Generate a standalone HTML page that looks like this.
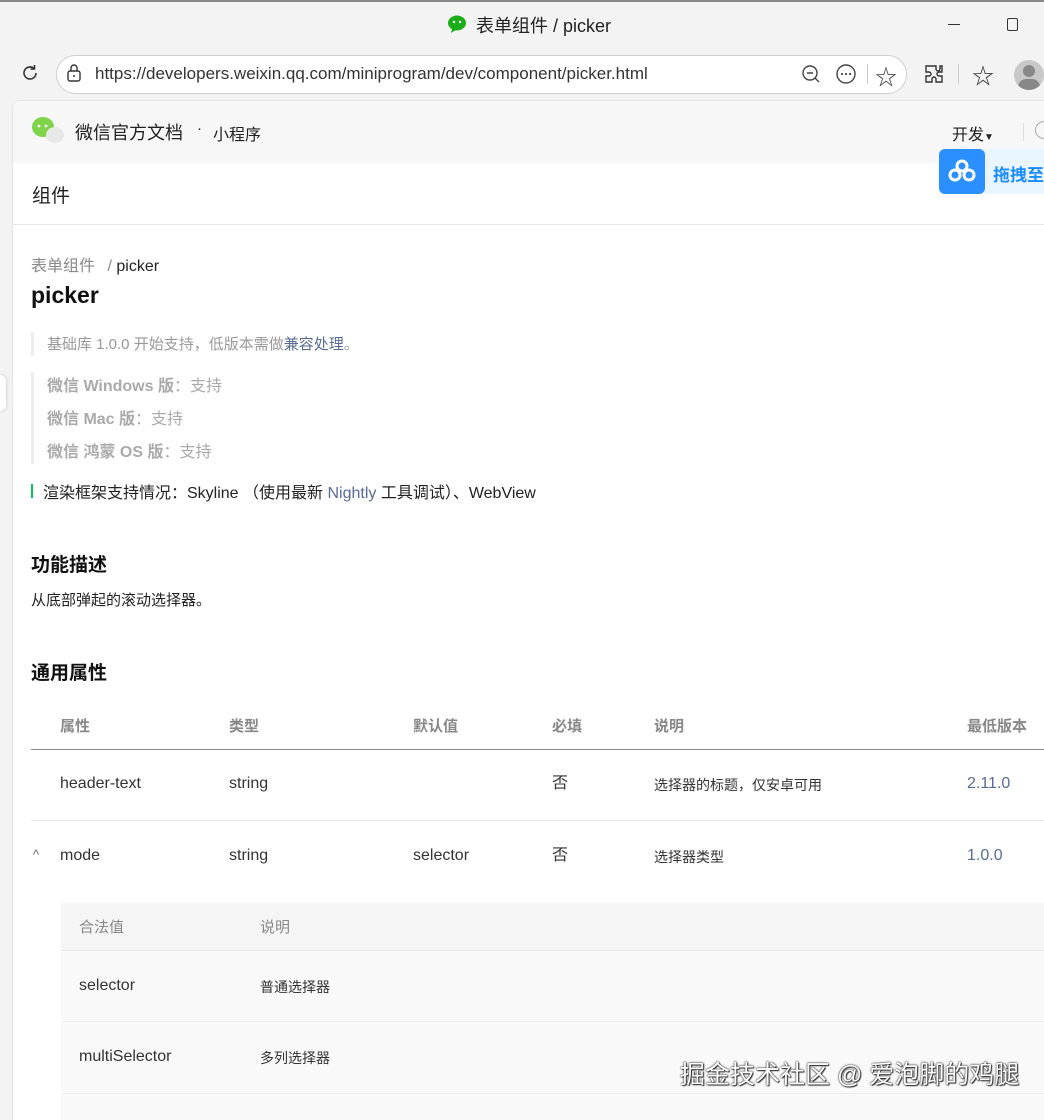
<!DOCTYPE html>
<html><head><meta charset="utf-8"><style>
*{margin:0;padding:0;box-sizing:border-box}
body{width:1044px;height:1116px;overflow:hidden;background:#f3f3f3;font-family:"Liberation Sans","Noto Sans CJK SC",sans-serif;position:relative;color:#1a1a1a}
.abs{position:absolute}
.title{top:0;left:0;width:1044px;height:46px;border-top:2px solid #888;}
.page{position:absolute;left:12px;top:100px;width:1040px;height:1020px;background:#fff;border-top-left-radius:8px;border-left:1px solid #e4e4e4;border-top:1px solid #e4e4e4;overflow:hidden}
.hdr{position:absolute;left:0;top:0;width:100%;height:62px;background:#f7f7f7}
.t{position:absolute;white-space:nowrap}
.g{color:#999}
.th{color:#888;font-size:15px;font-weight:bold}
.td{font-size:16px;color:#333;line-height:24px}
.tdc{font-size:14px;color:#333;line-height:24px}
.ver{color:#576b95;font-size:16px;line-height:24px}
</style></head><body>
<div class="abs title"></div>
<svg class="abs" style="left:447px;top:14px" width="20" height="20" viewBox="0 0 20 20"><ellipse cx="10" cy="9" rx="9" ry="7.5" fill="#1aad19"/><path d="M5 15 L4 19 L9 16Z" fill="#1aad19"/><circle cx="7" cy="8" r="1.2" fill="#fff"/><circle cx="13" cy="8" r="1.2" fill="#fff"/></svg>
<div class="t" style="left:476px;top:12px;font-size:18px;color:#222">表单组件 / picker</div>
<div class="abs" style="left:948px;top:24px;width:12px;height:1px;background:#333"></div>
<div class="abs" style="left:1007px;top:18px;width:11px;height:13px;border:1.3px solid #333;border-radius:2px"></div>
<svg class="abs" style="left:20px;top:63px" width="20" height="20" viewBox="0 0 20 20"><path d="M16 10 A6 6 0 1 1 14 5.5" fill="none" stroke="#333" stroke-width="1.6"/><path d="M14.5 2 L14.5 6 L10.5 6" fill="none" stroke="#333" stroke-width="1.6"/></svg>
<div class="abs" style="left:56px;top:55px;width:851px;height:39px;background:#fff;border:1px solid #cfcfcf;border-radius:20px"></div>
<svg class="abs" style="left:66px;top:64px" width="16" height="18" viewBox="0 0 16 18"><rect x="2" y="7" width="12" height="10" rx="2" fill="none" stroke="#333" stroke-width="1.4"/><path d="M5 7V4a3 3 0 0 1 6 0v3" fill="none" stroke="#333" stroke-width="1.4"/><circle cx="8" cy="12" r="1" fill="#333"/></svg>
<div class="t" style="left:95px;top:64px;font-size:17px;color:#333">https://developers.weixin.qq.com/miniprogram/dev/component/picker.html</div>
<svg class="abs" style="left:800px;top:63px" width="22" height="22" viewBox="0 0 22 22"><circle cx="10" cy="10" r="7" fill="none" stroke="#444" stroke-width="1.4"/><path d="M7 10h6M15 15l4 4" stroke="#444" stroke-width="1.4"/></svg>
<svg class="abs" style="left:835px;top:63px" width="22" height="22" viewBox="0 0 22 22"><circle cx="11" cy="11" r="9" fill="none" stroke="#444" stroke-width="1.4"/><circle cx="7" cy="11" r="1.1" fill="#444"/><circle cx="11" cy="11" r="1.1" fill="#444"/><circle cx="15" cy="11" r="1.1" fill="#444"/></svg>
<div class="abs" style="left:867px;top:64px;width:1px;height:20px;background:#ccc"></div>
<div class="t" style="left:875px;top:60px;font-size:22px;color:#444">☆</div>
<svg class="abs" style="left:922px;top:62px" width="24" height="24" viewBox="0 0 24 24"><path d="M9 4h5v3a2 2 0 0 0 4 0V4h0v0h2v6h-3a2 2 0 0 0 0 4h3v6H14v-3a2 2 0 0 0-4 0v3H4v-6h3a2 2 0 0 0 0-4H4V4z" fill="none" stroke="#333" stroke-width="1.4"/></svg>
<div class="abs" style="left:958px;top:64px;width:1px;height:20px;background:#ccc"></div>
<div class="t" style="left:972px;top:59px;font-size:22px;color:#333">☆</div>
<div class="abs" style="left:1014px;top:60px;width:30px;height:30px;border-radius:15px;background:#c8c8c8;overflow:hidden"><div class="abs" style="left:9px;top:5px;width:12px;height:12px;border-radius:6px;background:#888"></div><div class="abs" style="left:4px;top:19px;width:22px;height:16px;border-radius:10px;background:#888"></div></div>
<div class="abs" style="left:0;top:375px;width:6px;height:36px;background:#fff;border-radius:0 6px 6px 0;box-shadow:0 0 3px #bbb"></div>

<div class="page">
<div class="hdr"></div>
<svg class="abs" style="left:18px;top:15px" width="36" height="30" viewBox="0 0 36 30"><ellipse cx="12" cy="11" rx="11" ry="10" fill="#7fd44a"/><circle cx="8" cy="10" r="1.4" fill="#fff"/><circle cx="15" cy="10" r="1.4" fill="#fff"/><ellipse cx="24" cy="19" rx="9" ry="8" fill="#e8e8e8"/></svg>
<div class="t" style="left:62px;top:18px;font-size:18px;color:#222">微信官方文档</div>
<div class="t" style="left:184px;top:19px;font-size:15px;color:#222">·</div>
<div class="t" style="left:200px;top:20px;font-size:16px;color:#222">小程序</div>
<div class="t" style="left:939px;top:20px;font-size:16px;color:#222">开发<span style="font-size:10px">▼</span></div>
<div class="abs" style="left:1010px;top:22px;width:1px;height:18px;background:#ddd"></div>
<div class="abs" style="left:1022px;top:20px;width:18px;height:18px;border:1.5px solid #aaa;border-radius:9px"></div>
<div class="abs" style="left:926px;top:48px;width:120px;height:45px;background:#eaf6ff;border-radius:6px 0 0 6px"></div>
<div class="abs" style="left:926px;top:48px;width:46px;height:45px;background:#2b8fff;border-radius:6px"></div>
<svg class="abs" style="left:935px;top:58px" width="28" height="24" viewBox="0 0 28 24"><circle cx="14" cy="7" r="5" fill="none" stroke="#fff" stroke-width="3"/><circle cx="7" cy="16" r="5" fill="none" stroke="#fff" stroke-width="3"/><circle cx="21" cy="16" r="5" fill="none" stroke="#fff" stroke-width="3"/></svg>
<div class="t" style="left:980px;top:60px;font-size:17px;color:#1a8cff;font-weight:bold">拖拽至</div>

<div class="t" style="left:19px;top:80px;font-size:19px;color:#222">组件</div>
<div class="abs" style="left:0;top:123px;width:100%;height:1px;background:#e8e8e8"></div>

<div class="t g" style="left:18px;top:151px;font-size:16px;color:#888">表单组件 <span style="margin-left:8px">/</span> <span style="color:#222">picker</span></div>
<div class="t" style="left:18px;top:181px;font-size:23px;font-weight:bold;color:#111">picker</div>

<div class="abs" style="left:18px;top:231px;width:3px;height:24px;background:#eee"></div>
<div class="t" style="left:34px;top:232px;font-size:15px;color:#999">基础库 1.0.0 开始支持，低版本需做<span style="color:#576b95">兼容处理</span>。</div>
<div class="abs" style="left:18px;top:271px;width:3px;height:92px;background:#eee"></div>
<div class="t" style="left:34px;top:271px;font-size:16px;color:#aaa"><b>微信 Windows 版</b>：支持</div>
<div class="t" style="left:34px;top:304px;font-size:16px;color:#aaa"><b>微信 Mac 版</b>：支持</div>
<div class="t" style="left:34px;top:337px;font-size:16px;color:#aaa"><b>微信 鸿蒙 OS 版</b>：支持</div>
<div class="abs" style="left:18px;top:383px;width:2px;height:14px;background:#07c160"></div>
<div class="t" style="left:30px;top:378px;font-size:16px;color:#222">渲染框架支持情况：Skyline （使用最新 <span style="color:#576b95">Nightly</span> 工具调试）、WebView</div>

<div class="t" style="left:18px;top:449px;font-size:19px;font-weight:bold;color:#111">功能描述</div>
<div class="t" style="left:18px;top:488px;font-size:15px;color:#222">从底部弹起的滚动选择器。</div>
<div class="t" style="left:18px;top:557px;font-size:19px;font-weight:bold;color:#111">通用属性</div>

<div class="t th" style="left:47px;top:614px">属性</div>
<div class="t th" style="left:216px;top:614px">类型</div>
<div class="t th" style="left:400px;top:614px">默认值</div>
<div class="t th" style="left:539px;top:614px">必填</div>
<div class="t th" style="left:641px;top:614px">说明</div>
<div class="t th" style="left:954px;top:614px">最低版本</div>
<div class="abs" style="left:18px;top:648px;width:1030px;height:1px;background:#888"></div>

<div class="t td" style="left:47px;top:671px">header-text</div>
<div class="t td" style="left:216px;top:671px">string</div>
<div class="t td" style="left:539px;top:671px">否</div>
<div class="t tdc" style="left:641px;top:672px">选择器的标题，仅安卓可用</div>
<div class="t ver" style="left:954px;top:671px">2.11.0</div>
<div class="abs" style="left:18px;top:719px;width:1030px;height:1px;background:#e8e8e8"></div>

<div class="t" style="left:20px;top:746px;font-size:13px;color:#666">^</div>
<div class="t td" style="left:47px;top:743px">mode</div>
<div class="t td" style="left:216px;top:743px">string</div>
<div class="t td" style="left:400px;top:743px">selector</div>
<div class="t td" style="left:539px;top:743px">否</div>
<div class="t tdc" style="left:641px;top:744px">选择器类型</div>
<div class="t ver" style="left:954px;top:743px">1.0.0</div>

<div class="abs" style="left:48px;top:802px;width:1000px;height:230px;background:#f9f9f9;border-radius:4px 0 0 0"></div>
<div class="abs" style="left:48px;top:802px;width:1000px;height:47px;background:#f5f5f5"></div>
<div class="t" style="left:66px;top:815px;font-size:15px;color:#888">合法值</div>
<div class="t" style="left:247px;top:815px;font-size:15px;color:#888">说明</div>
<div class="abs" style="left:48px;top:849px;width:1000px;height:1px;background:#ebebeb"></div>
<div class="t td" style="left:66px;top:873px">selector</div>
<div class="t tdc" style="left:247px;top:874px">普通选择器</div>
<div class="abs" style="left:48px;top:920px;width:1000px;height:1px;background:#ebebeb"></div>
<div class="t td" style="left:66px;top:944px">multiSelector</div>
<div class="t tdc" style="left:247px;top:945px">多列选择器</div>
<div class="abs" style="left:48px;top:992px;width:1000px;height:1px;background:#ebebeb"></div>
</div>
<div class="t" style="left:680px;top:1055px;font-size:25px;color:#fff;text-shadow:0 0 2px #333,0 0 1px #000,1px 1px 1px #333">掘金技术社区 @ 爱泡脚的鸡腿</div>
</body></html>
